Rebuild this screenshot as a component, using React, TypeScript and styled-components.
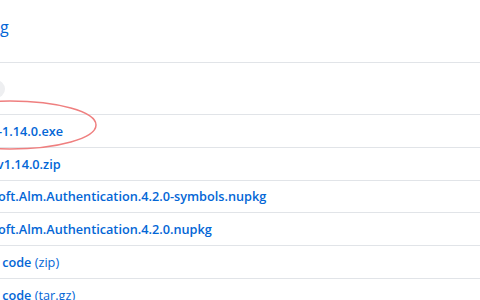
import * as React from "react";
import styled, { createGlobalStyle } from "styled-components";

const GlobalStyle = createGlobalStyle`
  html, body {
    margin: 0;
    padding: 0;
    background: #ffffff;
  }
  body {
    font-family: "Open Sans", "Noto Sans", "Liberation Sans", sans-serif;
    color: #24292e;
  }
`;

const Viewport = styled.div`
  position: relative;
  width: 480px;
  height: 300px;
  overflow: hidden;
`;

const Release = styled.div`
  margin-left: -77px;
  width: 568px;
`;

const Notes = styled.div`
  height: 63px;
  padding-top: 16px;
  padding-left: 7px;
  box-sizing: border-box;
  border-bottom: 1px solid #e1e4e8;
`;

const NoteLink = styled.a`
  font-size: 16px;
  color: #0366d6;
  text-decoration: none;
`;

const AssetsHeader = styled.div`
  height: 51px;
  display: flex;
  align-items: center;
  gap: 6px;
  padding-left: 11px;
  font-size: 14px;
  font-weight: 600;
`;

const Counter = styled.span`
  display: inline-block;
  min-width: 10px;
  padding: 1px 6px;
  border-radius: 20px;
  background: #eeeff1;
  color: #24292e;
  font-size: 12px;
  font-weight: 600;
  line-height: 16px;
  text-align: center;
`;

const AssetList = styled.ul`
  list-style: none;
  margin: 0;
  padding: 0;
`;

const AssetRow = styled.li`
  height: 31.8px;
  display: flex;
  align-items: center;
  gap: 8px;
  padding-left: 10px;
  border-top: 1px solid #e1e4e8;
`;

const AssetLink = styled.a`
  font-size: 12.7px;
  font-weight: 600;
  color: #0366d6;
  text-decoration: none;
  white-space: nowrap;
`;

const Format = styled.span`
  font-weight: 400;
`;

const Annotation = styled.svg`
  position: absolute;
  left: 0;
  top: 0;
  pointer-events: none;
`;

const PackageIcon = () => (
  <svg width="16" height="16" viewBox="0 0 16 16" fill="#6a737d">
    <path d="M1 4.27v7.47c0 .45.3.84.75.97l6.5 1.73c.16.05.34.05.5 0l6.5-1.73c.45-.13.75-.52.75-.97V4.27c0-.45-.3-.84-.75-.97l-6.5-1.74a1.4 1.4 0 00-.5 0L1.750 3.3c-.45.13-.75.52-.75.97zm7 9.09l-6-1.59V5l6 1.61v6.75zM2 4l2.5-.67L11 5.06l-2.5.67L2 4zm13 7.77l-6 1.59V6.61l2-.55V8.5l2-.53V5.53L15 5v6.77zm-2-7.24L6.5 2.8l2-.53L15 4l-2 .53z" />
  </svg>
);

const ZipIcon = () => (
  <svg width="16" height="16" viewBox="0 0 16 16" fill="#6a737d">
    <path d="M8.5 1H1c-.55 0-1 .45-1 1v12c0 .55.45 1 1 1h10c.55 0 1-.45 1-1V4.5L8.5 1zM11 14H1V2h3v1h1V2h3l3 3v9zM5 4V3h1v1H5zM4 4h1v1H4V4zm1 2V5h1v1H5zM4 6h1v1H4V6zm1 2V7h1v1H5zM4 9.28A2 2 0 003 11v1h4v-1a2 2 0 00-2-2V8H4v1.28zM6 10v1H4v-1h2z" />
  </svg>
);

const assets = [
  "GCMW-1.14.0.exe",
  "gcmw-v1.14.0.zip",
  "Microsoft.Alm.Authentication.4.2.0-symbols.nupkg",
  "Microsoft.Alm.Authentication.4.2.0.nupkg",
];

const sources = ["zip", "tar.gz"];

export default function App() {
  return (
    <>
      <GlobalStyle />
      <Viewport>
        <Release>
          <Notes>
            <NoteLink href="#">Changelog</NoteLink>
          </Notes>
          <AssetsHeader>
            Assets <Counter>6</Counter>
          </AssetsHeader>
          <AssetList>
            {assets.map((name) => (
              <AssetRow key={name}>
                <PackageIcon />
                <AssetLink href="#">{name}</AssetLink>
              </AssetRow>
            ))}
            {sources.map((kind) => (
              <AssetRow key={kind}>
                <ZipIcon />
                <AssetLink href="#">
                  Source code <Format>({kind})</Format>
                </AssetLink>
              </AssetRow>
            ))}
          </AssetList>
        </Release>
        <Annotation width="480" height="300">
          <ellipse
            cx="10"
            cy="125"
            rx="86"
            ry="24"
            fill="none"
            stroke="#ef7f7f"
            strokeWidth="1.5"
          />
        </Annotation>
      </Viewport>
    </>
  );
}
